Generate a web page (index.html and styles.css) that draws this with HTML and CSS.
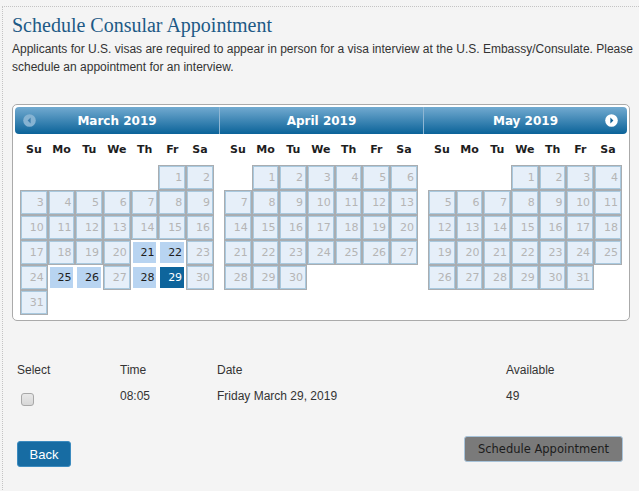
FILE: index.html
```html
<!DOCTYPE html>
<html>
<head>
<meta charset="utf-8">
<link rel="stylesheet" href="styles.css">
</head>
<body>
<div class="page">
  <h1 class="title">Schedule Consular Appointment</h1>
  <p class="intro">Applicants for U.S. visas are required to appear in person for a visa interview at the U.S. Embassy/Consulate. Please schedule an appointment for an interview.</p>

  <div class="cal">
    <div class="month">
      <div class="mhead mhead-first">
        <svg class="nav nav-prev" width="13" height="13" viewBox="0 0 13 13"><circle cx="6.5" cy="6.5" r="6.3" fill="#86b3d2"/><path d="M7.6 3.6 L4.6 6.5 L7.6 9.4 Z" fill="#3f7fae"/></svg>
        <span class="mtitle">March 2019</span>
      </div>
      <table class="grid">
        <thead><tr><th>Su</th><th>Mo</th><th>Tu</th><th>We</th><th>Th</th><th>Fr</th><th>Sa</th></tr></thead>
        <tbody>
          <tr><td></td><td></td><td></td><td></td><td></td><td class="off"><span>1</span></td><td class="off"><span>2</span></td></tr>
          <tr><td class="off"><span>3</span></td><td class="off"><span>4</span></td><td class="off"><span>5</span></td><td class="off"><span>6</span></td><td class="off"><span>7</span></td><td class="off"><span>8</span></td><td class="off"><span>9</span></td></tr>
          <tr><td class="off"><span>10</span></td><td class="off"><span>11</span></td><td class="off"><span>12</span></td><td class="off"><span>13</span></td><td class="off"><span>14</span></td><td class="off"><span>15</span></td><td class="off"><span>16</span></td></tr>
          <tr><td class="off"><span>17</span></td><td class="off"><span>18</span></td><td class="off"><span>19</span></td><td class="off"><span>20</span></td><td class="on"><span>21</span></td><td class="on"><span>22</span></td><td class="off"><span>23</span></td></tr>
          <tr><td class="off"><span>24</span></td><td class="on"><span>25</span></td><td class="on"><span>26</span></td><td class="off"><span>27</span></td><td class="on"><span>28</span></td><td class="on sel"><span>29</span></td><td class="off"><span>30</span></td></tr>
          <tr><td class="off"><span>31</span></td><td></td><td></td><td></td><td></td><td></td><td></td></tr>
        </tbody>
      </table>
    </div>

    <div class="month">
      <div class="mhead mhead-mid">
        <span class="mtitle">April 2019</span>
      </div>
      <table class="grid">
        <thead><tr><th>Su</th><th>Mo</th><th>Tu</th><th>We</th><th>Th</th><th>Fr</th><th>Sa</th></tr></thead>
        <tbody>
          <tr><td></td><td class="off"><span>1</span></td><td class="off"><span>2</span></td><td class="off"><span>3</span></td><td class="off"><span>4</span></td><td class="off"><span>5</span></td><td class="off"><span>6</span></td></tr>
          <tr><td class="off"><span>7</span></td><td class="off"><span>8</span></td><td class="off"><span>9</span></td><td class="off"><span>10</span></td><td class="off"><span>11</span></td><td class="off"><span>12</span></td><td class="off"><span>13</span></td></tr>
          <tr><td class="off"><span>14</span></td><td class="off"><span>15</span></td><td class="off"><span>16</span></td><td class="off"><span>17</span></td><td class="off"><span>18</span></td><td class="off"><span>19</span></td><td class="off"><span>20</span></td></tr>
          <tr><td class="off"><span>21</span></td><td class="off"><span>22</span></td><td class="off"><span>23</span></td><td class="off"><span>24</span></td><td class="off"><span>25</span></td><td class="off"><span>26</span></td><td class="off"><span>27</span></td></tr>
          <tr><td class="off"><span>28</span></td><td class="off"><span>29</span></td><td class="off"><span>30</span></td><td></td><td></td><td></td><td></td></tr>
        </tbody>
      </table>
    </div>

    <div class="month">
      <div class="mhead mhead-last">
        <span class="mtitle">May 2019</span>
        <svg class="nav nav-next" width="13" height="13" viewBox="0 0 13 13"><circle cx="6.5" cy="6.5" r="6.3" fill="#ffffff"/><path d="M5.4 3.6 L8.4 6.5 L5.4 9.4 Z" fill="#0e5f93"/></svg>
      </div>
      <table class="grid">
        <thead><tr><th>Su</th><th>Mo</th><th>Tu</th><th>We</th><th>Th</th><th>Fr</th><th>Sa</th></tr></thead>
        <tbody>
          <tr><td></td><td></td><td></td><td class="off"><span>1</span></td><td class="off"><span>2</span></td><td class="off"><span>3</span></td><td class="off"><span>4</span></td></tr>
          <tr><td class="off"><span>5</span></td><td class="off"><span>6</span></td><td class="off"><span>7</span></td><td class="off"><span>8</span></td><td class="off"><span>9</span></td><td class="off"><span>10</span></td><td class="off"><span>11</span></td></tr>
          <tr><td class="off"><span>12</span></td><td class="off"><span>13</span></td><td class="off"><span>14</span></td><td class="off"><span>15</span></td><td class="off"><span>16</span></td><td class="off"><span>17</span></td><td class="off"><span>18</span></td></tr>
          <tr><td class="off"><span>19</span></td><td class="off"><span>20</span></td><td class="off"><span>21</span></td><td class="off"><span>22</span></td><td class="off"><span>23</span></td><td class="off"><span>24</span></td><td class="off"><span>25</span></td></tr>
          <tr><td class="off"><span>26</span></td><td class="off"><span>27</span></td><td class="off"><span>28</span></td><td class="off"><span>29</span></td><td class="off"><span>30</span></td><td class="off"><span>31</span></td><td></td></tr>
        </tbody>
      </table>
    </div>
  </div>

  <div class="slots">
    <div class="slot-h">Select</div>
    <div class="slot-h">Time</div>
    <div class="slot-h">Date</div>
    <div class="slot-h">Available</div>
    <div class="slot-c"><input type="checkbox" class="check"></div>
    <div class="slot-c">08:05</div>
    <div class="slot-c">Friday March 29, 2019</div>
    <div class="slot-c">49</div>
  </div>

  <div class="actions">
    <button class="btn btn-back">Back</button>
    <button class="btn btn-schedule">Schedule Appointment</button>
  </div>
</div>
</body>
</html>
```

FILE: styles.css
```css
html, body {
  margin: 0;
  padding: 0;
  background: #f4f4f4;
}
body {
  font-family: "Liberation Sans", Arial, sans-serif;
  font-size: 12px;
  color: #333;
  height: 491px;
  overflow: hidden;
}
.page {
  margin: 6px 0 0 2px;
  border-left: 1px dotted #c4c4c4;
  border-top: 1px dotted #c4c4c4;
  padding: 5px 0 0 9px;
  min-height: 500px;
}
.title {
  margin: 0;
  font-family: "Liberation Serif", "Times New Roman", serif;
  font-weight: normal;
  font-size: 20px;
  line-height: 26px;
  color: #1d5a86;
}
.intro {
  margin: 2px 0 0 0;
  line-height: 18px;
  color: #333;
}
.cal {
  margin-top: 28px;
  width: 618px;
  box-sizing: border-box;
  border: 1px solid #aaaaaa;
  border-radius: 5px;
  background: #fff;
  padding: 2px;
  display: flex;
}
.month {
  width: 204px;
}
.mhead {
  position: relative;
  height: 27px;
  background: linear-gradient(#72aad0, #0b6399);
  display: flex;
  align-items: center;
  justify-content: center;
}
.mhead-first {
  border-radius: 4px 0 0 4px;
}
.mhead-mid, .mhead-last {
  border-left: 1px solid #8fb6d3;
}
.mhead-last {
  border-radius: 0 4px 4px 0;
}
.mtitle {
  font-family: "DejaVu Sans", Verdana, sans-serif;
  font-weight: bold;
  font-size: 12px;
  color: #fff;
}
.nav {
  position: absolute;
  top: 7px;
}
.nav-prev { left: 8px; }
.nav-next { right: 9px; }

.grid {
  width: 95%;
  margin: 0 auto 3px;
  border-collapse: collapse;
  table-layout: fixed;
  font-family: "DejaVu Sans", Verdana, sans-serif;
}
.grid th {
  height: 31px;
  padding: 0;
  font-size: 11px;
  font-weight: bold;
  color: #1e1e1e;
  text-align: center;
}
.grid td {
  padding: 1px;
}
.grid td span {
  display: block;
  box-sizing: border-box;
  height: 23px;
  line-height: 21px;
  text-align: right;
  padding-right: 2px;
  font-size: 11px;
}
.grid td.off {
  background: #a9adb1;
}
.grid td.off span {
  border: 1px solid #a9c9df;
  background: #e6eff9;
  color: #b5b5b5;
}
.grid td.on {
  background: #fff;
}
.grid td.on span {
  border: 1px solid #fff;
  background: #b8d4f1;
  color: #1e1e1e;
}
.grid td.sel span {
  background: #0e659c;
  color: #fff;
}

.slots {
  display: grid;
  grid-template-columns: 103px 97px 289px auto;
  grid-auto-rows: 26px;
  margin: 40px 0 0 5px;
  width: 613px;
}
.slot-h, .slot-c {
  line-height: 18px;
  color: #333;
}
.check {
  appearance: none;
  -webkit-appearance: none;
  margin: 6px 0 0 4px;
  width: 13px;
  height: 13px;
  box-sizing: border-box;
  border: 1px solid #a8a8a8;
  border-radius: 3px;
  background: linear-gradient(#e8e8e8, #d8d8d8);
}

.actions {
  display: flex;
  justify-content: space-between;
  align-items: flex-start;
  width: 618px;
  margin-top: 23px;
}
.btn {
  box-sizing: border-box;
  border-radius: 3px;
  cursor: pointer;
}
.btn-back {
  margin: 5px 0 0 5px;
  width: 54px;
  height: 26px;
  background: #176ca3;
  border: 1px solid #3c8bbf;
  color: #fff;
  font-family: "Liberation Sans", Arial, sans-serif;
  font-size: 13px;
  padding: 0;
}
.btn-schedule {
  margin-right: 7px;
  width: 159px;
  height: 26px;
  background: #7a7a7a;
  border: 1px solid #a7c3da;
  color: #1c1c1c;
  font-family: "DejaVu Sans", Verdana, sans-serif;
  font-size: 11.5px;
  padding: 0;
}
```
